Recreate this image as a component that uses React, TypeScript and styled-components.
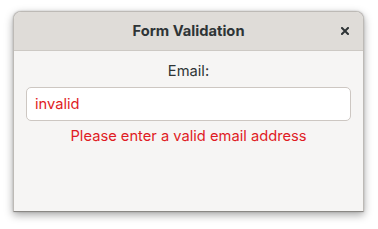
import React from "react";
import styled, { createGlobalStyle } from "styled-components";

const GlobalStyle = createGlobalStyle`
  html, body {
    margin: 0;
    padding: 0;
    background: #ffffff;
  }
  body {
    font-family: Inter, "Noto Sans", sans-serif;
  }
`;

const Page = styled.div`
  width: 378px;
  height: 229px;
  padding: 11px 14px 0 13px;
  box-sizing: border-box;
`;

const Window = styled.div`
  width: 351px;
  height: 201px;
  display: flex;
  flex-direction: column;
  background: #f6f5f4;
  border-radius: 8px 8px 0 0;
  border: 1px solid #bdbab6;
  border-bottom-color: #8a8885;
  box-sizing: border-box;
  box-shadow: 0 3px 9px rgba(0, 0, 0, 0.35), 0 0 2px rgba(0, 0, 0, 0.2);
  overflow: hidden;
`;

const TitleBar = styled.div`
  height: 39px;
  flex-shrink: 0;
  display: grid;
  grid-template-columns: 40px 1fr 40px;
  align-items: center;
  background: #dfdcd8;
  border-bottom: 1px solid #cdc9c4;
  box-sizing: border-box;
`;

const Title = styled.div`
  grid-column: 2;
  text-align: center;
  font-weight: 700;
  font-size: 14.7px;
  color: #2e3436;
`;

const CloseButton = styled.button`
  grid-column: 3;
  justify-self: center;
  width: 24px;
  height: 24px;
  padding: 0;
  margin-left: 4px;
  border: none;
  background: none;
  display: flex;
  align-items: center;
  justify-content: center;
  color: #2e3436;
  cursor: pointer;
`;

const Content = styled.div`
  display: flex;
  flex-direction: column;
  align-items: center;
  padding: 11px 12px 0;
`;

const Label = styled.label`
  font-size: 14.7px;
  color: #2e3436;
  line-height: 18px;
`;

const Entry = styled.input`
  margin-top: 7px;
  width: 100%;
  height: 34px;
  box-sizing: border-box;
  padding: 0 8px;
  border: 1px solid #cdc7c2;
  border-radius: 5px;
  background: #ffffff;
  font-family: inherit;
  font-size: 14.7px;
  color: #e01b24;
  outline: none;
`;

const ErrorText = styled.div`
  margin-top: 6px;
  font-size: 14.7px;
  line-height: 18px;
  color: #e01b24;
`;

export default function App() {
  return (
    <>
      <GlobalStyle />
      <Page>
        <Window>
          <TitleBar>
            <Title>Form Validation</Title>
            <CloseButton aria-label="Close">
              <svg width="8" height="8" viewBox="0 0 8 8">
                <path d="M1 1 L7 7 M7 1 L1 7" stroke="currentColor" strokeWidth="2" strokeLinecap="square" />
              </svg>
            </CloseButton>
          </TitleBar>
          <Content>
            <Label htmlFor="email">Email:</Label>
            <Entry id="email" defaultValue="invalid" />
            <ErrorText>Please enter a valid email address</ErrorText>
          </Content>
        </Window>
      </Page>
    </>
  );
}
